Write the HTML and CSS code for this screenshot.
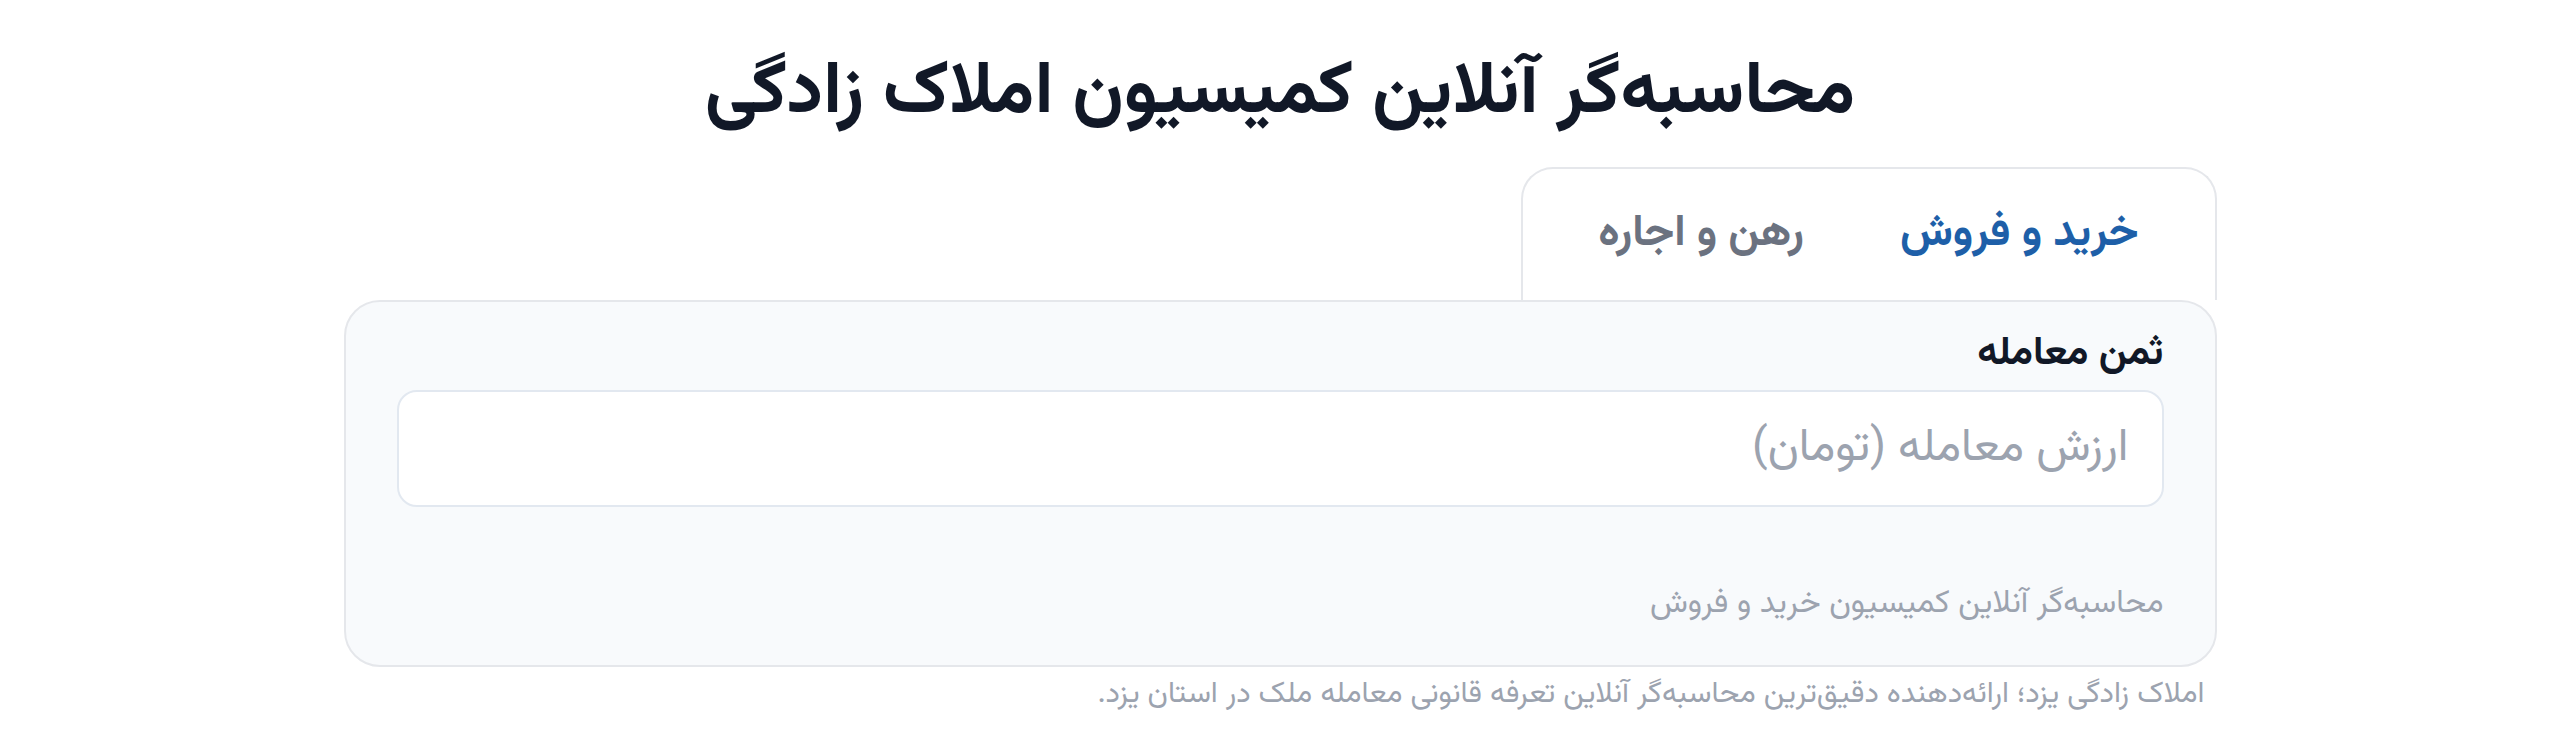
FILE: index.html
```html
<!DOCTYPE html>
<html lang="fa" dir="rtl">
<head>
<meta charset="utf-8">
<title>محاسبه‌گر آنلاین کمیسیون املاک زادگی</title>
<link rel="stylesheet" href="styles.css">
</head>
<body>
<main class="page">
  <h1 class="title">محاسبه‌گر آنلاین کمیسیون املاک زادگی</h1>
  <div class="tabs-row">
    <div class="tabs">
      <button class="tab tab-active" type="button">خرید و فروش</button>
      <button class="tab" type="button">رهن و اجاره</button>
    </div>
  </div>
  <section class="card">
    <label class="label" for="price">ثمن معامله</label>
    <input class="input" id="price" type="text" placeholder="ارزش معامله (تومان)">
    <p class="helper">محاسبه‌گر آنلاین کمیسیون خرید و فروش</p>
  </section>
  <p class="footer">املاک زادگی یزد؛ ارائه‌دهنده دقیق‌ترین محاسبه‌گر آنلاین تعرفه قانونی معامله ملک در استان یزد.</p>
</main>
</body>
</html>
```
FILE: styles.css
```css
* { box-sizing: border-box; }
html, body { margin: 0; padding: 0; background: #ffffff; }
body {
  font-family: "Vazirmatn", "Noto Sans Arabic", "DejaVu Sans", sans-serif;
  color: #111827;
}
.page {
  width: 1873px;
  margin: 0 auto;
  display: flex;
  flex-direction: column;
}
.title {
  margin: 46px 0 0;
  font-size: 74px;
  line-height: 96px;
  font-weight: 700;
  text-align: center;
  color: #111827;
}
.tabs-row {
  display: flex;
  justify-content: flex-start;
  margin-top: 25px;
}
.tabs {
  width: 696px;
  height: 133px;
  display: flex;
  align-items: center;
  padding: 0 28px;
  background: #ffffff;
  border: 2px solid #e5e7eb;
  border-bottom: none;
  border-radius: 32px 32px 0 0;
}
.tab {
  flex-shrink: 0;
  white-space: nowrap;
  font-family: inherit;
  background: none;
  border: none;
  padding: 0 48px;
  font-size: 44px;
  font-weight: 700;
  color: #6b7280;
  cursor: pointer;
}
.tab-active { color: #1e5fa8; }
.card {
  background: #f8fafc;
  border: 2px solid #e5e7eb;
  border-radius: 36px;
  padding: 26px 51px 38px;
  display: flex;
  flex-direction: column;
}
.label {
  font-size: 40px;
  line-height: 52px;
  font-weight: 700;
  color: #111827;
}
.input {
  margin-top: 10px;
  height: 117px;
  width: 100%;
  font-family: inherit;
  font-size: 46px;
  padding: 0 33px;
  background: #ffffff;
  border: 2px solid #e2e8f0;
  border-radius: 20px;
  color: #111827;
  outline: none;
}
.input::placeholder { color: #9ca3af; }
.helper {
  margin: 74px 0 0;
  font-size: 32px;
  line-height: 46px;
  color: #9ca3af;
}
.footer {
  margin: 7px 0 0;
  padding: 0 12px;
  font-size: 30px;
  line-height: 42px;
  color: #9ca3af;
}
```
